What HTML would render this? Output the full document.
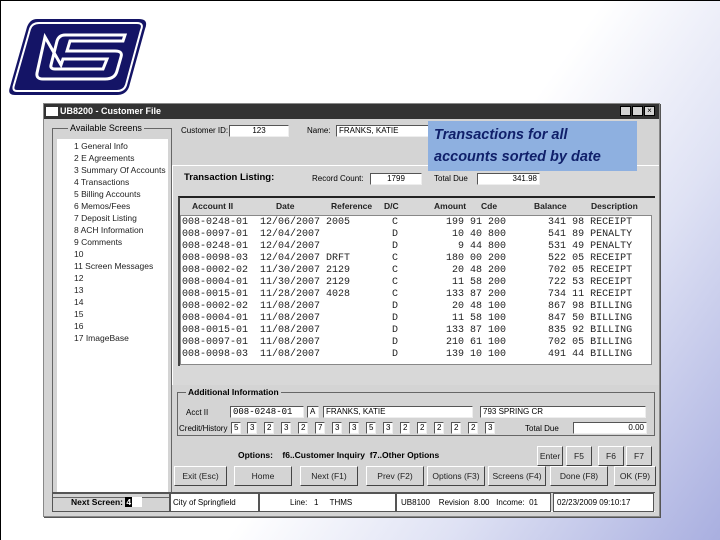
<!DOCTYPE html>
<html><head><style>
*{margin:0;padding:0;box-sizing:border-box}
body{width:720px;height:540px;position:relative;overflow:hidden;font-family:"Liberation Sans",sans-serif;font-size:9px;color:#000;
background:linear-gradient(125deg,#fff 0%,#fff 55%,#dfe2f4 75%,#a9afe0 100%);border-left:1px solid #000;border-top:1px solid #000}
.a{position:absolute}
.win{left:42px;top:102px;width:617px;height:414px;background:#d4d4d4;border:1px solid #888;box-shadow:1px 1px 0 #555}
.tb{left:0;top:0;width:615px;height:15px;background:#333;color:#fff;font-weight:bold;font-size:9px;line-height:15px;padding-left:16px}
.box{background:#fff;border:1px solid #555}
.mono{font-family:"Liberation Mono",monospace;font-size:10px;white-space:pre;line-height:12px}
.btn{background:#d4d4d4;border-right:1px solid #444;border-bottom:1px solid #444;border-top:1px solid #fff;border-left:1px solid #fff;text-align:center;line-height:18px;height:20px;font-size:8.5px;color:#222}
.lst div{height:12px;line-height:12px;font-size:8.5px;color:#222}
.fld{background:#fff;border:1px solid #555;border-right-color:#eee;border-bottom-color:#eee;height:12px;font-size:8px;line-height:10px;padding:0 2px}
</style></head><body>
<svg class="a" style="left:6px;top:14px" width="140" height="84" viewBox="0 0 140 84">
<path d="M30 4 H132 Q142 4 138 14 L122 72 Q119 80 110 80 H8 Q0 80 3 72 L20 12 Q23 4 30 4Z" fill="#141466"/>
<path d="M32 8 H130 Q137 8 134 15 L119 70 Q117 76 110 76 H10 Q5 76 7 70 L23 14 Q25 8 32 8Z" fill="none" stroke="#fff" stroke-width="2"/>
<path d="M38 22 L30 58 Q29 64 36 64 H98 Q108 64 110 56 L114 42 Q116 36 108 36 H60 L63 26 H116 L118 20 H58 Q52 20 50 26 L44 50 Q43 54 48 54 H96 L100 44 H56 L54 50 Z" fill="none" stroke="#fff" stroke-width="3"/>
</svg>
<div class="a win">
<div class="a tb"><span class="a" style="left:2px;top:3px;width:12px;height:9px;background:#fff"></span>UB8200 - Customer File</div>
<div class="a" style="left:576px;top:2px;width:11px;height:10px;background:#d4d4d4;border:1px solid #000"></div>
<div class="a" style="left:588px;top:2px;width:11px;height:10px;background:#d4d4d4;border:1px solid #000"></div>
<div class="a" style="left:600px;top:2px;width:11px;height:10px;background:#d4d4d4;border:1px solid #000;font-size:8px;line-height:8px;text-align:center">×</div>
<div class="a" style="left:8px;top:24px;width:120px;height:370px;border:1px solid #666"></div>
<div class="a" style="left:24px;top:19px;background:#d4d4d4;padding:0 2px;font-size:9px">Available Screens</div>
<div class="a box lst" style="left:13px;top:35px;width:111px;height:355px;border:none;padding:1px 0 0 17px">
<div>1 General Info</div><div>2 E Agreements</div><div>3 Summary Of Accounts</div><div>4 Transactions</div><div>5 Billing Accounts</div><div>6 Memos/Fees</div><div>7 Deposit Listing</div><div>8 ACH Information</div><div>9 Comments</div><div>10</div><div>11 Screen Messages</div><div>12</div><div>13</div><div>14</div><div>15</div><div>16</div><div>17 ImageBase</div>
</div>
<div class="a" style="left:137px;top:22px;font-size:8px">Customer ID:</div>
<div class="a fld" style="left:185px;top:21px;width:60px;text-align:center">123</div>
<div class="a" style="left:263px;top:22px;font-size:8px">Name:</div>
<div class="a fld" style="left:292px;top:21px;width:100px">FRANKS, KATIE</div>
<div class="a" style="left:128px;top:61px;width:487px;height:220px;background:#d8d8d8;border-top:1px solid #fff;border-left:1px solid #fff"></div>
<div class="a" style="left:140px;top:68px;font-weight:bold;font-size:9.5px">Transaction Listing:</div>
<div class="a" style="left:268px;top:70px;font-size:8px">Record Count:</div>
<div class="a fld" style="left:326px;top:69px;width:52px;text-align:center">1799</div>
<div class="a" style="left:390px;top:70px;font-size:8px">Total Due</div>
<div class="a fld" style="left:433px;top:69px;width:63px;text-align:right">341.98</div>
<div class="a" style="left:134px;top:92px;width:477px;height:170px;border-top:2px solid #222;border-left:2px solid #444"></div>
<div class="a" style="left:136px;top:97px;width:475px;font-weight:bold;font-size:8.5px;color:#222">
<span class="a" style="left:12px">Account II</span><span class="a" style="left:96px">Date</span><span class="a" style="left:151px">Reference</span><span class="a" style="left:204px">D/C</span><span class="a" style="left:254px">Amount</span><span class="a" style="left:301px">Cde</span><span class="a" style="left:354px">Balance</span><span class="a" style="left:411px">Description</span></div>
<div class="a box mono" style="left:136px;top:111px;width:472px;height:150px;border:1px solid #888;padding:1px 0 0 1px;color:#222">008-0248-01  12/06/2007 2005       C        199 91 200       341 98 RECEIPT
008-0097-01  12/04/2007            D         10 40 800       541 89 PENALTY
008-0248-01  12/04/2007            D          9 44 800       531 49 PENALTY
008-0098-03  12/04/2007 DRFT       C        180 00 200       522 05 RECEIPT
008-0002-02  11/30/2007 2129       C         20 48 200       702 05 RECEIPT
008-0004-01  11/30/2007 2129       C         11 58 200       722 53 RECEIPT
008-0015-01  11/28/2007 4028       C        133 87 200       734 11 RECEIPT
008-0002-02  11/08/2007            D         20 48 100       867 98 BILLING
008-0004-01  11/08/2007            D         11 58 100       847 50 BILLING
008-0015-01  11/08/2007            D        133 87 100       835 92 BILLING
008-0097-01  11/08/2007            D        210 61 100       702 05 BILLING
008-0098-03  11/08/2007            D        139 10 100       491 44 BILLING</div>
<div class="a" style="left:133px;top:288px;width:478px;height:44px;border:1px solid #666"></div>
<div class="a" style="left:142px;top:283px;background:#d4d4d4;padding:0 2px;font-weight:bold;font-size:8.5px">Additional Information</div>
<div class="a" style="left:142px;top:304px;font-size:8px">Acct II</div>
<div class="a fld" style="left:186px;top:302px;width:74px;font-family:'Liberation Mono',monospace;font-size:9px">008-0248-01</div>
<div class="a fld" style="left:263px;top:302px;width:12px">A</div>
<div class="a fld" style="left:279px;top:302px;width:150px">FRANKS, KATIE</div>
<div class="a fld" style="left:436px;top:302px;width:166px">793 SPRING CR</div>
<div class="a" style="left:135px;top:320px;font-size:8px">Credit/History</div>
<div class="a" style="left:187px;top:318px;font-size:8px">
<span class="a fld" style="left:0">5</span><span class="a fld" style="left:16px">3</span><span class="a fld" style="left:33px">2</span><span class="a fld" style="left:50px">3</span><span class="a fld" style="left:67px">2</span><span class="a fld" style="left:84px">7</span><span class="a fld" style="left:101px">3</span><span class="a fld" style="left:118px">3</span><span class="a fld" style="left:135px">5</span><span class="a fld" style="left:152px">3</span><span class="a fld" style="left:169px">2</span><span class="a fld" style="left:186px">2</span><span class="a fld" style="left:203px">2</span><span class="a fld" style="left:220px">2</span><span class="a fld" style="left:237px">2</span><span class="a fld" style="left:254px">3</span></div>
<div class="a" style="left:481px;top:320px;font-size:8px">Total Due</div>
<div class="a fld" style="left:529px;top:318px;width:74px;text-align:right">0.00</div>
<div class="a" style="left:194px;top:346px;font-weight:bold;font-size:8.5px">Options: &nbsp;&nbsp; f6..Customer Inquiry &nbsp;f7..Other Options</div>
<div class="a btn" style="left:493px;top:342px;width:26px">Enter</div>
<div class="a btn" style="left:522px;top:342px;width:26px">F5</div>
<div class="a btn" style="left:554px;top:342px;width:26px">F6</div>
<div class="a btn" style="left:582px;top:342px;width:26px">F7</div>
<div class="a btn" style="left:130px;top:362px;width:53px">Exit (Esc)</div>
<div class="a btn" style="left:190px;top:362px;width:58px">Home</div>
<div class="a btn" style="left:256px;top:362px;width:58px">Next (F1)</div>
<div class="a btn" style="left:322px;top:362px;width:58px">Prev (F2)</div>
<div class="a btn" style="left:383px;top:362px;width:58px">Options (F3)</div>
<div class="a btn" style="left:444px;top:362px;width:58px">Screens (F4)</div>
<div class="a btn" style="left:506px;top:362px;width:58px">Done (F8)</div>
<div class="a btn" style="left:570px;top:362px;width:42px">OK (F9)</div>
<div class="a" style="left:8px;top:388px;width:603px;height:20px;border-top:1px solid #555;border-bottom:1px solid #fff"></div>
<div class="a" style="left:8px;top:389px;width:118px;height:19px;border:1px solid #555;font-weight:bold;font-size:8.5px;line-height:17px;padding-left:18px">Next Screen: <span style="background:#000;color:#fff;padding:0 1px">4</span><span style="background:#fff;padding:0 5px"> </span></div>
<div class="a box" style="left:126px;top:389px;width:89px;height:19px;font-size:8px;line-height:17px;padding-left:2px">City of Springfield</div>
<div class="a box" style="left:215px;top:389px;width:137px;height:19px;font-size:8px;line-height:17px;padding-left:30px">Line: &nbsp;&nbsp;1 &nbsp;&nbsp;&nbsp;&nbsp;THMS</div>
<div class="a box" style="left:352px;top:389px;width:155px;height:19px;font-size:8px;line-height:17px;padding-left:4px">UB8100 &nbsp;&nbsp;&nbsp;Revision &nbsp;8.00 &nbsp;&nbsp;Income: &nbsp;01</div>
<div class="a box" style="left:509px;top:389px;width:101px;height:19px;font-size:8px;line-height:17px;padding-left:3px">02/23/2009 09:10:17</div>
</div>
<div class="a" style="left:427px;top:120px;width:209px;height:50px;background:#8eb0e0;color:#10206a;font-style:italic;font-weight:bold;font-size:14.5px;line-height:22px;padding:3px 0 0 6px;font-family:'Liberation Sans',sans-serif">Transactions for all<br>accounts sorted by date</div>
</body></html>
